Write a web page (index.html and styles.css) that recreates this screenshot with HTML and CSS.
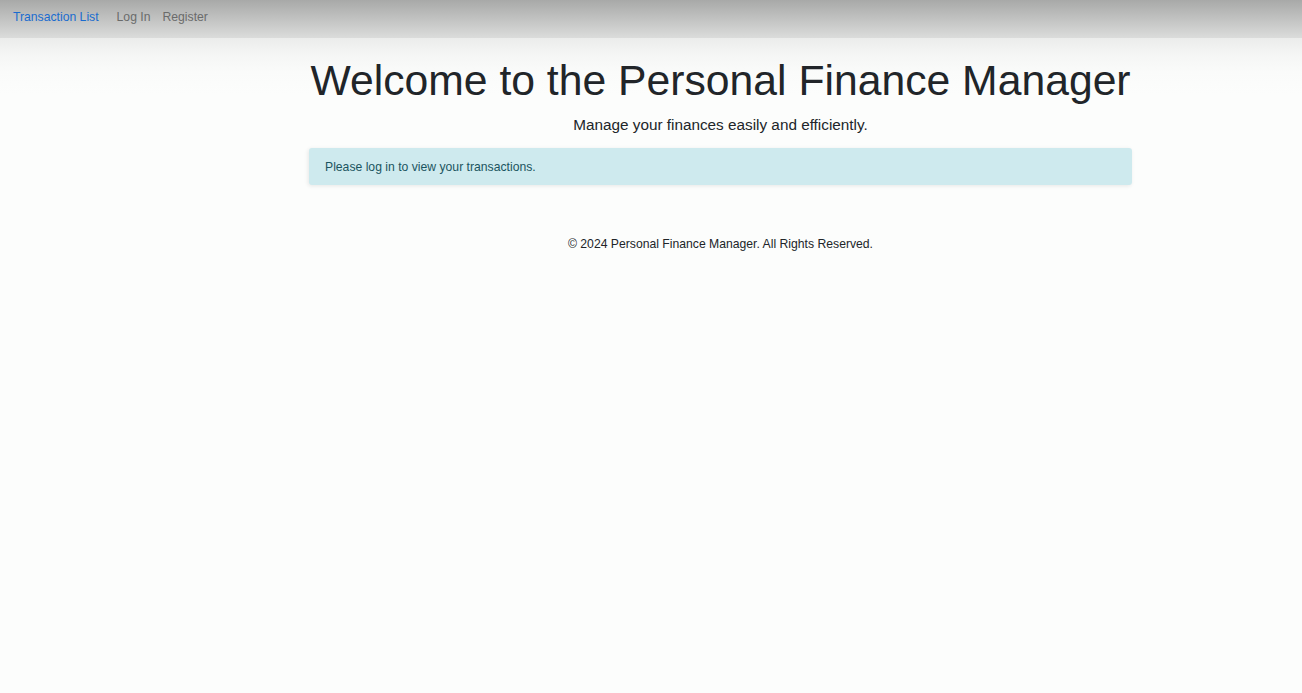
FILE: index.html
```html
<!DOCTYPE html>
<html lang="en">
<head>
<meta charset="utf-8">
<title>Personal Finance Manager</title>
<link rel="stylesheet" href="styles.css">
</head>
<body>
<nav class="navbar">
  <a class="brand" href="#">Transaction List</a>
  <div class="nav-links">
    <a class="nav-link" href="#">Log In</a>
    <a class="nav-link" href="#">Register</a>
  </div>
</nav>
<div class="layout">
  <div class="side"></div>
  <main class="main">
    <h1 class="title">Welcome to the Personal Finance Manager</h1>
    <p class="lead">Manage your finances easily and efficiently.</p>
    <div class="alert">Please log in to view your transactions.</div>
    <footer class="footer">© 2024 Personal Finance Manager. All Rights Reserved.</footer>
  </main>
</div>
</body>
</html>
```
FILE: styles.css
```css
html, body {
  margin: 0;
  padding: 0;
}
body {
  font-family: "Liberation Sans", Arial, sans-serif;
  background: linear-gradient(#ebeceb 38px, #f5f6f5 55px, #fafbfa 72px, #fcfdfc 95px) no-repeat, #fcfdfc;
  color: #212529;
  min-height: 693px;
}
.navbar {
  height: 38px;
  display: flex;
  align-items: center;
  padding: 0 13px 4px;
  box-sizing: border-box;
  background: linear-gradient(#a8a9a8, #dbdcdb);
}
.brand {
  color: #1a6ccf;
  text-decoration: none;
  font-size: 12.2px;
  margin-right: 12px;
}
.nav-links {
  display: flex;
}
.nav-link {
  color: #6a6b6b;
  text-decoration: none;
  font-size: 12.2px;
  padding: 0 6px;
}
.layout {
  display: flex;
}
.side {
  width: 309px;
  flex: none;
}
.main {
  width: 823px;
  flex: none;
  text-align: center;
}
.title {
  font-weight: 400;
  font-size: 42.7px;
  line-height: 1.2;
  margin: 17px 0 0;
  white-space: nowrap;
}
.lead {
  font-size: 15.3px;
  margin: 10px 0 14px;
}
.alert {
  text-align: left;
  background: #ceeaee;
  color: #1b5560;
  border-radius: 3px;
  box-shadow: -1px 1px 4px rgba(0,0,0,0.09);
  padding: 12px 16px 10px;
  font-size: 12.2px;
  line-height: 15px;
}
.footer {
  font-size: 12.2px;
  margin-top: 52px;
}
```
